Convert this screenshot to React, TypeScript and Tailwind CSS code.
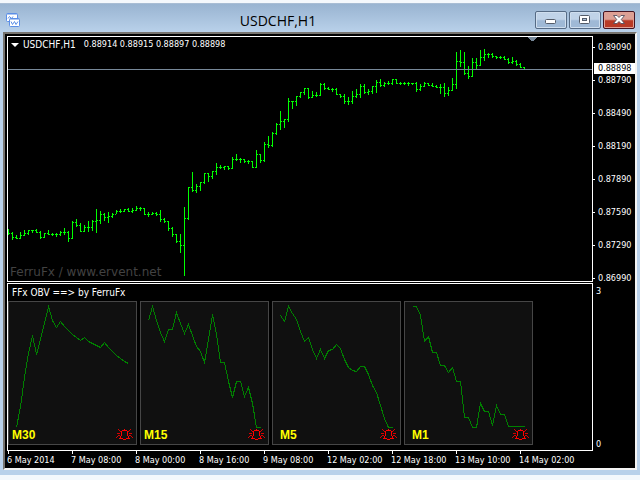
import type { ReactNode } from 'react';

/** [high, low, close] of every bar, one bar each 4px */
const bars: [number, number, number][] = [
  [229, 234, 233], [232, 239, 237], [235, 238, 238], [232, 238, 235], [230, 235, 233],
  [230, 234, 230], [230, 232, 230], [229, 232, 232], [231, 238, 237], [233, 237, 233],
  [230, 234, 234], [233, 235, 234], [233, 236, 234], [231, 235, 232], [228, 234, 232],
  [231, 241, 238], [221, 238, 222], [219, 226, 225], [223, 231, 231], [225, 231, 227],
  [221, 231, 227], [220, 230, 221], [209, 232, 220], [211, 223, 214], [213, 220, 217],
  [212, 222, 216], [213, 217, 214], [210, 213, 211], [209, 212, 211], [209, 211, 209],
  [208, 211, 211], [208, 212, 210], [206, 210, 208], [207, 210, 208], [208, 214, 214],
  [212, 216, 214], [212, 214, 213], [212, 215, 214], [210, 221, 219], [218, 222, 221],
  [221, 230, 228], [227, 236, 234], [234, 242, 241], [234, 252, 245], [207, 275, 218],
  [187, 219, 187], [172, 191, 190], [184, 192, 186], [182, 190, 182], [173, 183, 173],
  [173, 181, 176], [171, 178, 171], [163, 174, 167], [165, 168, 167], [166, 169, 166],
  [166, 169, 168], [157, 168, 159], [154, 160, 159], [158, 162, 159], [159, 162, 161],
  [160, 163, 161], [161, 167, 167], [150, 167, 154], [154, 162, 160], [142, 161, 144],
  [136, 147, 145], [132, 146, 133], [123, 134, 124], [111, 129, 121], [119, 127, 119],
  [98, 121, 101], [101, 108, 101], [96, 105, 96], [92, 97, 92], [88, 94, 88],
  [88, 98, 97], [91, 97, 95], [92, 96, 95], [83, 95, 84], [83, 89, 88],
  [87, 89, 89], [88, 91, 89], [88, 94, 94], [94, 97, 96], [94, 103, 101],
  [97, 104, 101], [91, 103, 96], [89, 97, 94], [84, 97, 86], [84, 93, 92],
  [89, 94, 91], [86, 93, 86], [80, 92, 82], [79, 86, 85], [82, 86, 83],
  [81, 84, 83], [79, 84, 79], [79, 83, 83], [82, 84, 83], [82, 84, 83],
  [82, 85, 83], [83, 84, 83], [82, 91, 89], [84, 90, 86], [82, 86, 83],
  [83, 85, 85], [83, 86, 86], [85, 87, 87], [84, 93, 87], [83, 96, 93],
  [87, 95, 90], [78, 90, 84], [52, 88, 61], [50, 66, 62], [52, 74, 73],
  [66, 78, 76], [58, 76, 62], [58, 69, 65], [50, 65, 57], [49, 60, 54],
  [53, 57, 54], [53, 57, 56], [56, 58, 57], [56, 58, 57], [56, 59, 59],
  [58, 63, 62], [57, 63, 61], [60, 65, 64], [63, 67, 67], [67, 69, 69],
];

const panels = [
  {
    id: 'M30',
    inset: 'pl-[3px]',
    values: [427, 406, 377, 353, 335, 354, 339, 323, 306, 320, 327, 321, 326, 330, 334, 337, 340, 337, 341, 343, 345, 347, 342, 347, 351, 355, 358, 361, 363],
  },
  {
    id: 'M15',
    inset: 'pl-[3px]',
    values: [320, 306, 320, 332, 341, 329, 329, 312, 323, 333, 324, 335, 346, 351, 362, 339, 314, 334, 362, 362, 381, 397, 381, 381, 396, 387, 403, 427, 427],
  },
  {
    id: 'M5',
    inset: 'pl-[7px]',
    values: [315, 321, 306, 313, 319, 331, 341, 337, 349, 358, 349, 358, 350, 349, 344, 348, 359, 367, 370, 371, 366, 366, 374, 385, 392, 405, 418, 427, 427],
  },
  {
    id: 'M1',
    inset: 'pl-[7px]',
    values: [306, 306, 315, 341, 336, 352, 352, 365, 365, 372, 367, 381, 381, 417, 417, 427, 427, 403, 411, 411, 425, 405, 414, 414, 426, 426, 426, 426, 426],
  },
];

const prices = ['0.89090', '0.88790', '0.88490', '0.88190', '0.87890', '0.87590', '0.87290', '0.86990'];

const times = [
  '6 May 2014',
  '7 May 08:00',
  '8 May 00:00',
  '8 May 16:00',
  '9 May 08:00',
  '12 May 02:00',
  '12 May 18:00',
  '13 May 10:00',
  '14 May 02:00',
];

function barsPath() {
  return bars
    .map(([high, low, close], i) => {
      const x = 8 + i * 4;
      const openTick = i > 0 ? `M${x - 1} ${bars[i - 1][2]}h1v1h-1z` : '';
      return `M${x} ${high}h1V${low + 1}h-1z${openTick}M${x + 1} ${close}h1v1h-1z`;
    })
    .join('');
}

function WindowButton({ label, close = false, children }: { label: string; close?: boolean; children: ReactNode }) {
  return (
    <button
      type="button"
      aria-label={label}
      className={`flex h-[18px] w-8 items-center justify-center rounded-xs border ${
        close
          ? 'border-[#431422] bg-linear-to-b from-[#dca095] from-45% to-[#b83a26] to-55% shadow-[inset_0_0_0_1px_#e0a095]'
          : 'border-[#566b85] bg-linear-to-b from-[#c0d3e8] from-45% to-[#9fb9d6] to-55% shadow-[inset_0_0_0_1px_#cfdeee]'
      }`}
    >
      {children}
    </button>
  );
}

function TitleBar() {
  return (
    <header className="grid h-[29px] grid-cols-[18px_1fr_102px] items-center border-t border-[#a8bdd4] bg-linear-to-b from-[#99b4d1] to-[#b9d1ea] px-[5px]">
      <svg className="ml-px mt-0.5 h-[15px] w-[15px]" viewBox="0 0 15 15" aria-hidden>
        <rect x="0.5" y="1.5" width="11" height="8" rx="1" fill="#fff" stroke="#5c8fe6" />
        <path d="M1 2h10" stroke="#5c8fe6" />
        <path d="M2 6.500l1.500-2 2 2 1.500-2" fill="none" stroke="#5c8fe6" />
        <rect x="3.500" y="6.500" width="10" height="8" rx="1" fill="#fff" stroke="#5c8fe6" />
        <path d="M4 7h9" stroke="#5c8fe6" />
        <path d="M5 9.500l1.500 3 2-3 1.500 3 2-3" fill="none" stroke="#5c8fe6" />
      </svg>
      <h1 className="pt-1.5 text-center font-['Open_Sans','Noto_Sans',sans-serif] text-[14px] leading-5 text-black">
        USDCHF,H1
      </h1>
      <div className="flex justify-end gap-0.5 pt-1">
        <WindowButton label="Minimize">
          <svg width="12" height="12" viewBox="0 0 12 12" aria-hidden>
            <rect x="0.500" y="5.500" width="10" height="4" rx="1" fill="#fff" stroke="#545c69" />
          </svg>
        </WindowButton>
        <WindowButton label="Maximize">
          <svg width="12" height="12" viewBox="0 0 12 12" aria-hidden>
            <rect x="0.500" y="1.500" width="10" height="8" rx="1" fill="#fff" stroke="#545c69" />
            <rect x="3.500" y="4.500" width="4" height="2" fill="#a9bdd5" stroke="#545c69" />
          </svg>
        </WindowButton>
        <WindowButton label="Close" close>
          <svg width="12" height="12" viewBox="0 0 12 12" aria-hidden>
            <path
              d="M0.500 1.500h3.500l2 2 2-2h3.500l-3.200 4 3.200 4h-3.500l-2-2-2 2h-3.500l3.200-4z"
              fill="#fff"
              stroke="#56505f"
              strokeWidth="0.900"
            />
          </svg>
        </WindowButton>
      </div>
    </header>
  );
}

function AlarmIcon() {
  return (
    <svg width="17" height="12" viewBox="0 0 17 12" fill="none" stroke="#ff0000" shapeRendering="crispEdges" aria-hidden>
      <path d="M8 0.500h1M6 1.500h5M5.500 2v5M11.500 2v5M4.500 7v2M12.500 7v2M3 9.500h4M10 9.500h4M7 10.500h3" />
      <path
        d="M2 0.500h1M3 1.500h1M4 2.500h1M14 0.500h1M13 1.500h1M12 2.500h1M1 4.500h3M13 4.500h3M2 6.500h2M1 7.500h1M13 6.500h2M15 7.500h1M0 8.500h1M16 8.500h1"
        stroke="#d80000"
      />
    </svg>
  );
}

function PriceChart() {
  return (
    <section className="relative border border-white" aria-label="USDCHF,H1">
      <svg className="block h-[244px] w-full" aria-hidden>
        <g transform="translate(-8 -37)" shapeRendering="crispEdges">
          <path d={barsPath()} fill="#00ff00" />
          <path d="M528 37h9v1h-1v1h-1v1h-1v1h-3v-1h-1v-1h-1v-1h-1z" fill="#778899" />
          <path d="M8 69.500h4000" stroke="#778899" />
        </g>
      </svg>
      <div className="absolute left-[3px] top-0.5 flex items-center text-white">
        <svg width="8" height="4" viewBox="0 0 8 4" aria-hidden>
          <path d="M0 0h8L4 4z" fill="#fff" />
        </svg>
        <span className="pl-1 text-[10px]">USDCHF,H1</span>
        <span className="pl-2">0.88914 0.88915 0.88897 0.88898</span>
      </div>
      <p className="absolute bottom-0.5 left-0.5 font-['DejaVu_Sans',sans-serif] text-[12px] leading-[14px] text-[#424242]">
        FerruFx / www.ervent.net
      </p>
    </section>
  );
}

function IndicatorPanels() {
  return (
    <section className="mt-px border border-white pb-[5px]">
      <h2 className="h-[17px] pl-1 pt-[3px] text-[10px]">FFx OBV ==&gt; by FerruFx</h2>
      <div className="flex gap-[3px]">
        {panels.map((panel) => (
          <div key={panel.id} className="relative w-[129px] border border-[#464646] bg-[#101010]">
            <svg className="block h-[142px] w-full" viewBox="0 302 127 142" aria-hidden>
              <polyline
                points={panel.values.map((y, i) => `${7.5 + i * 4},${y + 0.5}`).join(' ')}
                fill="none"
                stroke="#008000"
                shapeRendering="crispEdges"
              />
            </svg>
            <div className={`absolute inset-x-0 bottom-0.5 flex items-center justify-between pr-[3px] ${panel.inset}`}>
              <h3 className="font-['Liberation_Sans',Arial,sans-serif] text-[12px] font-bold leading-[14px] text-[#ffff00]">
                {panel.id}
              </h3>
              <AlarmIcon />
            </div>
          </div>
        ))}
      </div>
    </section>
  );
}

function AxisLabel({ children }: { children: ReactNode }) {
  return (
    <li className="flex h-[11px] items-center">
      <span className="h-px w-0.5 bg-white" />
      <span className="pl-[3px]">{children}</span>
    </li>
  );
}

function PriceAxis() {
  return (
    <div className="relative flex flex-col justify-between pb-px pt-1.5">
      <ul className="flex flex-col gap-[22px]">
        {prices.map((price) => (
          <AxisLabel key={price}>{price}</AxisLabel>
        ))}
      </ul>
      <div className="absolute left-px right-0 top-[27px] h-[11px] bg-white pl-1 text-black">0.88898</div>
      <div className="flex h-[164px] flex-col justify-between pl-[3px]">
        <span>3</span>
        <span>0</span>
      </div>
    </div>
  );
}

function TimeAxis() {
  return (
    <ol className="flex h-[17px] overflow-hidden whitespace-nowrap">
      {times.map((time) => (
        <li key={time} className="w-16 shrink-0">
          <span className="ml-px block h-[3px] w-px bg-white" />
          <span className="block pt-px">{time}</span>
        </li>
      ))}
    </ol>
  );
}

export default function App() {
  return (
    <main className="min-h-screen bg-[#f4f8fc] pt-[3px] font-['DejaVu_Sans_Condensed','DejaVu_Sans',sans-serif] text-[9px] leading-[11px] text-white">
      <div className="bg-[#b9d1ea] pb-[5px]">
        <TitleBar />
        <div className="mx-[3px] border-2 border-b-[#f4f4f4] border-l-[#77746f] border-r-[#f4f4f4] border-t-[#77746f] bg-black">
          <div className="pl-0.5 pt-0.5">
            <div className="grid grid-cols-[1fr_42px]">
              <div className="min-w-0">
                <PriceChart />
                <IndicatorPanels />
              </div>
              <PriceAxis />
            </div>
            <TimeAxis />
          </div>
        </div>
      </div>
    </main>
  );
}
